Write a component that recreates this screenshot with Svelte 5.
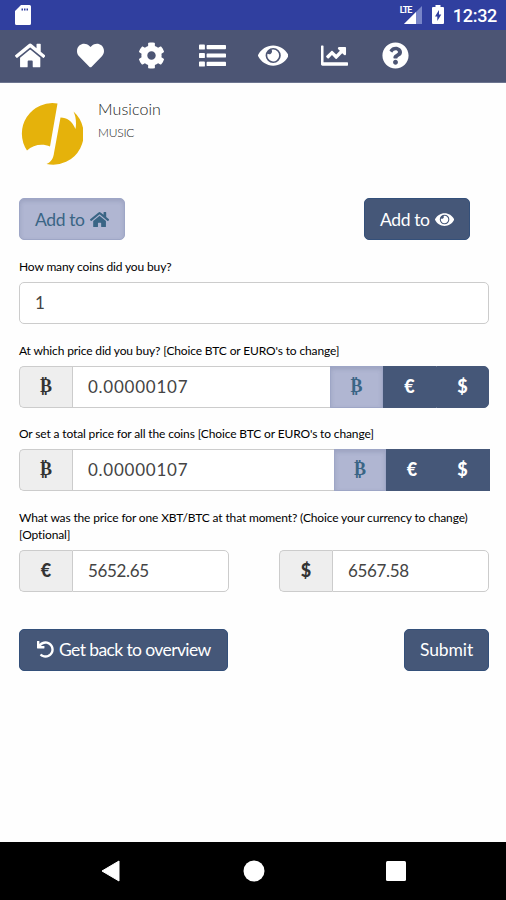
<script>
    const icons = {
        home: { w: 576, d: 'M280.37 148.26L96 300.11V464a16 16 0 0 0 16 16l112.06-.29a16 16 0 0 0 15.92-16V368a16 16 0 0 1 16-16h64a16 16 0 0 1 16 16v95.64a16 16 0 0 0 16 16.05L464 480a16 16 0 0 0 16-16V300L295.67 148.26a12.19 12.19 0 0 0-15.3 0zM571.6 251.47L488 182.56V44.05a12 12 0 0 0-12-12h-56a12 12 0 0 0-12 12v72.61L318.47 43a48 48 0 0 0-61 0L4.34 251.47a12 12 0 0 0-1.6 16.9l25.5 31A12 12 0 0 0 45.15 301l235.22-193.74a12.19 12.19 0 0 1 15.3 0L530.9 301a12 12 0 0 0 16.9-1.6l25.5-31a12 12 0 0 0-1.7-16.93z' },
        heart: { w: 512, d: 'M462.3 62.6C407.5 15.9 326 24.3 275.7 76.2L256 96.5l-19.7-20.3C186.1 24.3 104.5 15.9 49.7 62.6c-62.8 53.6-66.1 149.8-9.9 207.9l193.5 199.8c12.5 12.9 32.8 12.9 45.3 0l193.5-199.8c56.3-58.1 53-154.3-9.8-207.9z' },
        cog: { w: 512, d: 'M487.4 315.7l-42.6-24.6c4.3-23.2 4.3-47 0-70.2l42.6-24.6c4.9-2.8 7.1-8.6 5.5-14-11.1-35.6-30-67.8-54.7-94.6-3.8-4.1-10-5.1-14.8-2.3L380.8 110c-17.9-15.4-38.5-27.3-60.8-35.1V25.8c0-5.6-3.9-10.5-9.4-11.7-36.7-8.2-74.3-7.8-109.2 0-5.5 1.2-9.4 6.1-9.4 11.7V75c-22.2 7.9-42.8 19.8-60.8 35.1L88.7 85.5c-4.9-2.8-11-1.9-14.8 2.3-24.7 26.7-43.6 58.9-54.7 94.6-1.7 5.4.6 11.2 5.5 14L67.3 221c-4.3 23.2-4.3 47 0 70.2l-42.6 24.6c-4.9 2.8-7.1 8.6-5.5 14 11.1 35.6 30 67.8 54.7 94.6 3.8 4.1 10 5.1 14.8 2.3l42.6-24.6c17.9 15.4 38.5 27.3 60.8 35.1v49.2c0 5.6 3.9 10.5 9.4 11.7 36.7 8.2 74.3 7.8 109.2 0 5.5-1.2 9.4-6.1 9.4-11.7v-49.2c22.2-7.9 42.8-19.8 60.8-35.1l42.6 24.6c4.9 2.8 11 1.9 14.8-2.3 24.7-26.7 43.6-58.9 54.7-94.6 1.5-5.5-.7-11.3-5.6-14.1zM256 336c-44.1 0-80-35.9-80-80s35.9-80 80-80 80 35.9 80 80-35.9 80-80 80z' },
        list: { w: 512, d: 'M16 48h80a16 16 0 0 1 16 16v64a16 16 0 0 1-16 16H16a16 16 0 0 1-16-16V64a16 16 0 0 1 16-16zM16 208h80a16 16 0 0 1 16 16v64a16 16 0 0 1-16 16H16a16 16 0 0 1-16-16v-64a16 16 0 0 1 16-16zM16 368h80a16 16 0 0 1 16 16v64a16 16 0 0 1-16 16H16a16 16 0 0 1-16-16v-64a16 16 0 0 1 16-16zM160 56h336a16 16 0 0 1 16 16v48a16 16 0 0 1-16 16H160a16 16 0 0 1-16-16V72a16 16 0 0 1 16-16zM160 216h336a16 16 0 0 1 16 16v48a16 16 0 0 1-16 16H160a16 16 0 0 1-16-16v-48a16 16 0 0 1 16-16zM160 376h336a16 16 0 0 1 16 16v48a16 16 0 0 1-16 16H160a16 16 0 0 1-16-16v-48a16 16 0 0 1 16-16z' },
        eye: { w: 576, d: 'M572.52 241.4C518.29 135.59 410.93 64 288 64S57.68 135.64 3.48 241.41a32.35 32.35 0 0 0 0 29.19C57.71 376.41 165.07 448 288 448s230.32-71.64 284.52-177.41a32.35 32.35 0 0 0 0-29.19zM288 400a144 144 0 1 1 144-144 143.93 143.93 0 0 1-144 144zM288 144a112 112 0 0 0-31 4.500 56 56 0 0 1-76.500 76.500A112 112 0 1 0 288 144z' },
        chart: { w: 512, d: 'M500 384H48V76c0-6.6-5.4-12-12-12H12C5.4 64 0 69.4 0 76v344c0 15.5 12.500 28 28 28h472c6.6 0 12-5.4 12-12v-40c0-6.6-5.4-12-12-12zM456 96H344c-21.4 0-32.1 25.9-17 41l30.9 30.9L288 237.8l-68.7-68.7c-6.2-6.2-16.4-6.2-22.6 0L99.6 266.3c-4.7 4.7-4.7 12.3 0 17l28.1 28.1c4.7 4.7 12.3 4.7 17 0L208 248l68.7 68.7c6.2 6.2 16.4 6.2 22.6 0l103.5-103.5L433.7 244c15.1 15.1 41 4.4 41-17V115c0-10.5-8.2-19-18.7-19z' },
        question: { w: 512, d: 'M504 256c0 136.997-111.043 248-248 248S8 392.997 8 256C8 119.083 119.043 8 256 8s248 111.083 248 248zM262.655 90c-54.497 0-89.255 22.957-116.549 63.758-3.536 5.286-2.353 12.415 2.715 16.258l34.699 26.31c5.205 3.947 12.621 3.008 16.665-2.122 17.864-22.658 30.113-35.797 57.303-35.797 20.429 0 45.698 13.148 45.698 32.958 0 14.976-12.363 22.667-32.534 33.976C247.128 238.528 216 254.941 216 296v4c0 6.627 5.373 12 12 12h56c6.627 0 12-5.373 12-12v-1.333c0-28.462 83.186-29.647 83.186-106.667 0-58.002-60.165-102-116.531-102zM256 338c-25.365 0-46 20.635-46 46 0 25.364 20.635 46 46 46s46-20.636 46-46c0-25.365-20.635-46-46-46z' },
        undo: { w: 512, d: 'M212.333 224.333H12c-6.627 0-12-5.373-12-12V12C0 5.373 5.373 0 12 0h48c6.627 0 12 5.373 12 12v78.112C117.773 39.279 184.26 7.47 258.175 8.007c136.906.994 246.448 111.623 246.157 248.532C504.041 393.258 393.12 504 256.333 504c-64.089 0-122.496-24.313-166.51-64.215-5.099-4.622-5.334-12.554-.467-17.42l33.967-33.967c4.474-4.474 11.662-4.717 16.401-.525C170.76 415.336 211.58 432 256.333 432c97.268 0 176-78.716 176-176 0-97.267-78.716-176-176-176-58.496 0-110.28 28.476-142.274 72.333h98.274c6.627 0 12 5.373 12 12v48c0 6.627-5.373 12-12 12z' }
    };

    const menu = ['home', 'heart', 'cog', 'list', 'eye', 'chart', 'question'];
    const currencies = ['₿', '€', '$'];

    let amount = $state('1');
    let price = $state('0.00000107');
    let total = $state('0.00000107');
    let euro = $state('5652.65');
    let dollar = $state('6567.58');
    let priceCurrency = $state('₿');
    let totalCurrency = $state('₿');

    function handleSubmit(event) {
        event.preventDefault();
    }
</script>

{#snippet icon(name)}
    <svg class="icon" viewBox="0 0 {icons[name].w} 512" fill="currentColor" fill-rule="evenodd" aria-hidden="true">
        <path d={icons[name].d} />
    </svg>
{/snippet}

<div class="screen">
    <div class="status-bar">
        <svg class="sd" viewBox="0 0 16 20" fill="#fff">
            <path fill-rule="evenodd" d="M6 0h8.5a1.5 1.5 0 0 1 1.5 1.5v17a1.5 1.5 0 0 1-1.5 1.5h-13A1.5 1.5 0 0 1 0 18.5V6zM6.500 3.500v2h1.500v-2zm2.500 0v2h1.500v-2zm2.500 0v2h1.500v-2z" />
        </svg>
        <div class="status-right">
            <div class="signal">
                <svg viewBox="0 0 18 18" width="18" height="18">
                    <path fill="#7885c8" d="M18 0v18H0z" />
                    <path fill="#fff" d="M12 6v12H0z" />
                </svg>
                <span class="lte">LTE</span>
            </div>
            <svg class="battery" viewBox="0 0 12 19">
                <path fill="#fff" fill-rule="evenodd" d="M3.5 0h5v2H11a1 1 0 0 1 1 1v15a1 1 0 0 1-1 1H1a1 1 0 0 1-1-1V3a1 1 0 0 1 1-1h2.5zM7 5l-4 6.500h2.300V16l4-6.500H7z" />
            </svg>
            <span class="clock">12:32</span>
        </div>
    </div>

    <nav class="menu">
        {#each menu as name}
            <a href="#{name}" class="menu-item" aria-label={name}>{@render icon(name)}</a>
        {/each}
    </nav>

    <main class="content">
        <div class="coin">
            <svg class="coin-logo" viewBox="0 0 62 62" fill="#e5b20b">
                <path d="M36.500 0.500L29 43.500C22 40.500 12 41.500 6 47.500A30.500 30.500 0 0 1 36.500 0.500z" />
                <path d="M39.500 14.500C46 14.500 51 18 54.500 26C55.500 20 55 13.500 52.500 8.500A30.500 30.500 0 0 1 25.500 61C30 59 32.500 55 33 50z" />
            </svg>
            <div class="coin-text">
                <span class="coin-name">Musicoin</span>
                <span class="coin-symbol">MUSIC</span>
            </div>
        </div>

        <div class="add-buttons">
            <button type="button" class="btn active">Add to {@render icon('home')}</button>
            <button type="button" class="btn">Add to {@render icon('eye')}</button>
        </div>

        <form onsubmit={handleSubmit}>
            <label for="amount">How many coins did you buy?</label>
            <div class="input-group">
                <input id="amount" bind:value={amount} />
            </div>

            <label for="price">At which price did you buy? [Choice BTC or EURO's to change]</label>
            <div class="input-group">
                <span class="addon btc">₿</span>
                <input id="price" class="wide" bind:value={price} />
                {#each currencies as c}
                    <button type="button" class="currency" class:btc={c === '₿'} class:active={priceCurrency === c} onclick={() => (priceCurrency = c)}>{c}</button>
                {/each}
            </div>

            <label for="total">Or set a total price for all the coins [Choice BTC or EURO's to change]</label>
            <div class="input-group total">
                <span class="addon btc">₿</span>
                <input id="total" class="wide" bind:value={total} />
                {#each currencies as c}
                    <button type="button" class="currency" class:btc={c === '₿'} class:active={totalCurrency === c} onclick={() => (totalCurrency = c)}>{c}</button>
                {/each}
            </div>

            <label for="euro">What was the price for one XBT/BTC at that moment? (Choice your currency to change)<br />[Optional]</label>
            <div class="pair">
                <div class="input-group">
                    <span class="addon">€</span>
                    <input id="euro" bind:value={euro} />
                </div>
                <div class="input-group">
                    <span class="addon">$</span>
                    <input id="dollar" aria-label="Dollar price" bind:value={dollar} />
                </div>
            </div>

            <div class="actions">
                <button type="button" class="btn back">{@render icon('undo')} Get back to overview</button>
                <button type="submit" class="btn submit">Submit</button>
            </div>
        </form>
    </main>

    <div class="android-nav">
        <svg viewBox="0 0 20 22" width="20" height="22"><path fill="#fff" d="M18 1v20L1 11z" stroke="#fff" stroke-linejoin="round" /></svg>
        <svg viewBox="0 0 22 22" width="22" height="22"><circle cx="11" cy="11" r="10.5" fill="#fff" /></svg>
        <svg viewBox="0 0 20 20" width="20" height="20"><rect width="20" height="20" rx="1.5" fill="#fff" /></svg>
    </div>
</div>

<style>
    :global(body) {
        margin: 0;
        background: #fefefe;
    }
    * {
        box-sizing: border-box;
    }
    .screen {
        display: flex;
        flex-direction: column;
        width: 506px;
        height: 900px;
        overflow: hidden;
        font-family: Lato, sans-serif;
    }
    .status-bar {
        display: flex;
        justify-content: space-between;
        height: 30px;
        padding: 5px 9px 0 15px;
        background: #303f9f;
        color: #fff;
    }
    .sd {
        width: 16px;
        height: 20px;
    }
    .status-right {
        display: flex;
        align-items: flex-start;
    }
    .signal {
        position: relative;
        width: 18px;
        height: 18px;
        margin: 1px 10px 0 0;
    }
    .lte {
        position: absolute;
        top: -1px;
        left: -4px;
        padding-right: 1px;
        background: #303f9f;
        font: bold 9px/10px Roboto, sans-serif;
        letter-spacing: -1px;
    }
    .battery {
        width: 12px;
        height: 19px;
        margin-right: 9px;
    }
    .clock {
        font: 500 18px/22px Roboto, sans-serif;
        letter-spacing: -0.3px;
    }
    .menu {
        display: flex;
        height: 53px;
        background: #4c5574;
        border-bottom: 1px solid #6d7590;
    }
    .menu-item {
        display: flex;
        align-items: center;
        justify-content: center;
        width: 61px;
        padding: 0 3px 1px 0;
        color: #fff;
    }
    .menu-item:first-child {
        padding-right: 1px;
    }
    .menu-item .icon {
        height: 27px;
    }
    .icon {
        display: inline-block;
        height: 17px;
    }
    .content {
        flex: 1;
        padding: 20px 16px 0 19px;
    }
    .coin {
        display: flex;
        height: 95px;
        padding-left: 2px;
    }
    .coin-logo {
        width: 62px;
        height: 62px;
    }
    .coin-text {
        display: flex;
        flex-direction: column;
        margin-left: 15px;
        color: #222;
        font-weight: 300;
    }
    .coin-name {
        margin-top: -5px;
        font-size: 16px;
        line-height: 21px;
        letter-spacing: 0.1px;
    }
    .coin-symbol {
        margin-top: 4px;
        font-size: 12px;
        line-height: 20px;
        letter-spacing: -0.2px;
    }
    .btn {
        display: flex;
        align-items: center;
        gap: 5px;
        height: 42px;
        padding: 0 15px;
        border: 1px solid #34507a;
        border-radius: 5px;
        background: #455778;
        color: #fff;
        font: 17.5px Lato, sans-serif;
        letter-spacing: -0.4px;
        white-space: nowrap;
    }
    .btn .icon {
        flex: none;
    }
    .add-buttons {
        display: flex;
        justify-content: space-between;
        width: 451px;
    }
    .add-buttons .btn {
        width: 106px;
    }
    .btn.back {
        width: 209px;
        padding-left: 17px;
        letter-spacing: -0.6px;
    }
    .btn.submit {
        width: 85px;
        letter-spacing: -0.1px;
    }
    .btn.active,
    .currency.active {
        border-color: #9ea6c6;
        background: #b0b6d2;
        color: #3a6585;
        box-shadow: inset 0 2px 4px rgba(60, 70, 110, 0.18);
    }
    form {
        margin-top: 18px;
    }
    label {
        display: block;
        color: #000;
        font-size: 12px;
        line-height: 17px;
        letter-spacing: -0.14px;
        white-space: nowrap;
    }
    .input-group {
        display: flex;
        width: 470px;
        height: 42px;
        margin: 7px 0 17.6px;
    }
    input {
        flex: 1;
        min-width: 0;
        height: 42px;
        padding: 0 15px 1px;
        border: 1px solid #ccc;
        border-radius: 5px;
        background: #fff;
        color: #444;
        font: 17px Lato, sans-serif;
        letter-spacing: -0.35px;
        outline: none;
    }
    .addon {
        display: flex;
        align-items: center;
        justify-content: center;
        width: 53px;
        padding-bottom: 2px;
        border: 1px solid #ccc;
        border-right: 0;
        border-radius: 5px 0 0 5px;
        background: #eee;
        color: #333;
        font-size: 18px;
        font-weight: 900;
    }
    .addon + input {
        border-radius: 0 5px 5px 0;
    }
    .addon + input.wide {
        border-right: 0;
        border-radius: 0;
        letter-spacing: 0.75px;
    }
    .currency {
        width: 53px;
        padding: 0 0 2px;
        border: 1px solid #455778;
        background: #455778;
        color: #fff;
        font: 900 18px Lato, sans-serif;
    }
    .btc {
        font-family: 'DejaVu Serif', 'DejaVu Sans', serif;
        font-size: 18px;
        font-weight: bold;
    }
    .currency:last-child {
        border-radius: 0 5px 5px 0;
    }
    .total {
        width: 471px;
    }
    .total .currency {
        width: 52px;
    }
    .total .currency:last-child {
        padding-right: 3px;
        border-radius: 0;
    }
    .pair {
        display: flex;
        justify-content: space-between;
        width: 470px;
    }
    .pair .input-group {
        width: 210px;
        margin-bottom: 37px;
    }
    .actions {
        display: flex;
        justify-content: space-between;
        width: 470px;
    }
    .android-nav {
        display: flex;
        align-items: center;
        justify-content: space-between;
        height: 58px;
        padding: 0 100px 0 101px;
        background: #000;
    }
</style>
